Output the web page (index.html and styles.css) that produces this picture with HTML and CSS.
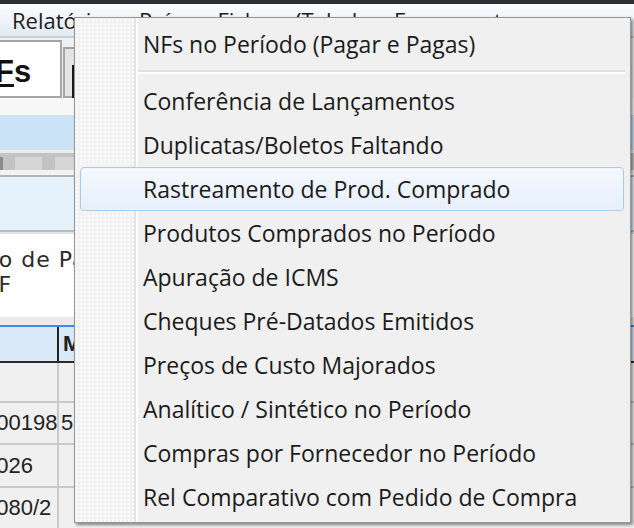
FILE: index.html
```html
<!DOCTYPE html>
<html lang="pt-BR">
<head>
    <meta charset="UTF-8">
    <title>Relatórios</title>
    <link rel="stylesheet" href="styles.css">
</head>
<body>
    <div class="screen">
        <div class="titlebar"></div>

        <div class="menubar">
            <span class="mb-item mb-rel">Relatórios</span>
            <span class="mb-item mb-pai">Países</span>
            <span class="mb-item mb-fic">Fichas</span>
            <span class="mb-item mb-tab">(Tabelas</span>
            <span class="mb-item">Ferramentas</span>
        </div>

        <div class="tabs">
            <div class="tab tab-main"><span class="tab-label"><u>F</u>s</span></div>
            <div class="tab tab-side"><span class="caret"></span></div>
        </div>

        <div class="gap-white"></div>
        <div class="band-blue"></div>

        <div class="toolstrip">
            <span class="tool tool-dark"></span>
            <span class="tool tool-a"></span>
            <span class="tool tool-b"></span>
        </div>
        <div class="strip-lines"></div>

        <div class="band-pale"></div>

        <div class="text-panel">
            <div class="line line-1">Tipo de Pagamento</div>
            <div class="line line-2">NF</div>
        </div>
        <div class="panel-foot"></div>

        <div class="grid">
            <div class="grid-head">
                <div class="c1"></div>
                <div class="c2">M</div>
            </div>
            <div class="grid-row r1">
                <div class="c1"></div>
                <div class="c2"></div>
            </div>
            <div class="grid-row r2">
                <div class="c1 cut">200198</div>
                <div class="c2">5</div>
            </div>
            <div class="grid-row r3">
                <div class="c1 cut">1026</div>
                <div class="c2"></div>
            </div>
            <div class="grid-row r4">
                <div class="c1 cut">2080/2</div>
                <div class="c2"></div>
            </div>
        </div>

        <!-- popup do menu Relatórios -->
        <div class="menu">
            <div class="item">NFs no Período (Pagar e Pagas)</div>
            <div class="sep"></div>
            <div class="item">Conferência de Lançamentos</div>
            <div class="item">Duplicatas/Boletos Faltando</div>
            <div class="item active">Rastreamento de Prod. Comprado</div>
            <div class="item">Produtos Comprados no Período</div>
            <div class="item">Apuração de ICMS</div>
            <div class="item">Cheques Pré-Datados Emitidos</div>
            <div class="item">Preços de Custo Majorados</div>
            <div class="item">Analítico / Sintético no Período</div>
            <div class="item">Compras por Fornecedor no Período</div>
            <div class="item">Rel Comparativo com Pedido de Compra</div>
        </div>
    </div>
</body>
</html>
```

FILE: styles.css
```css
* {
    margin: 0;
    padding: 0;
    box-sizing: border-box;
}

body {
    width: 634px;
    height: 528px;
    overflow: hidden;
    background: #f0f0f0;
    font-family: 'Open Sans', 'Noto Sans', sans-serif;
    color: #1c1c1c;
}

.screen {
    position: relative;
    width: 634px;
    height: 528px;
    overflow: hidden;
    display: flex;
    flex-direction: column;
}

.titlebar {
    height: 4px;
    flex: none;
    background: #2e3236;
}

.menubar {
    height: 34px;
    flex: none;
    display: flex;
    align-items: center;
    gap: 14px;
    padding-left: 12px;
    background: linear-gradient(#fbfcfe, #e3eaf3);
    border-bottom: 2px solid #c9cfd6;
    font-size: 22px;
    white-space: nowrap;
}

.mb-item {
    flex: none;
}

.mb-rel { margin-right: 10px; }

.tabs {
    height: 60px;
    flex: none;
    display: flex;
    padding-top: 2px;
    background: #f0f0f0;
}

.tab-main {
    width: 62px;
    background: #fff;
    border: 2px solid #a5a5a5;
    border-left: none;
    overflow: hidden;
    padding-top: 12px;
}

.tab-label {
    display: block;
    margin-left: -5px;
    font: bold 31px 'Liberation Sans', sans-serif;
    color: #111;
    white-space: nowrap;
}

.tab-side {
    width: 12px;
    margin-left: 1px;
    margin-top: 7px;
    background: #e4e4e4;
    border: 2px solid #a5a5a5;
    border-right: none;
    display: flex;
    justify-content: flex-end;
}

.caret {
    width: 3px;
    height: 33px;
    margin-top: 16px;
    background: #1a1a1a;
}

.gap-white {
    height: 17px;
    flex: none;
    background: #f7f7f7;
}

.band-blue {
    height: 35px;
    flex: none;
    background: #cce4f8;
}

.toolstrip {
    height: 20px;
    flex: none;
    display: flex;
    align-items: flex-end;
    background: #c3c3c3;
    border-top: 3px solid #ececec;
}

.tool {
    height: 13px;
    background: #d6d6d6;
}

.tool-dark { width: 3px; background: #8a8a8a; margin-right: 12px; }
.tool-a { width: 27px; margin-right: 13px; }
.tool-b { width: 30px; }

.strip-lines {
    height: 7px;
    flex: none;
    background: #f2f2f2;
    border-bottom: 2px solid #b5b5b5;
}

.band-pale {
    height: 55px;
    flex: none;
    background: #e5f1fb;
    border-bottom: 2px solid #bcbcbc;
}

.text-panel {
    height: 85px;
    flex: none;
    background: #fff;
    border-top: 2px solid #e2e2e2;
    padding-top: 13px;
    overflow: hidden;
    font: 22px/25px 'DejaVu Sans', sans-serif;
    letter-spacing: 1px;
    color: #2a2a2a;
    white-space: nowrap;
}

.line-1 { text-indent: -37px; }
.line-2 { text-indent: -19px; }

.panel-foot {
    height: 8px;
    flex: none;
    background: #ebebeb;
}

.grid {
    flex: 1;
    display: flex;
    flex-direction: column;
    font: 22px 'Liberation Sans', sans-serif;
    color: #222;
}

.grid-head {
    height: 38px;
    flex: none;
    display: flex;
    background: #d9e9f8;
    border-top: 2px solid #3a8ee8;
    border-bottom: 2px solid #2b2b2b;
}

.grid-head .c1 {
    width: 59px;
    border-right: 2px solid #222;
}

.grid-head .c2 {
    padding-left: 4px;
    font-weight: bold;
    display: flex;
    align-items: center;
}

.grid-row {
    flex: none;
    display: flex;
    background: #f0f0f0;
    border-bottom: 2px solid #c9c9c9;
}

.r1 { height: 40px; }
.r2 { height: 42px; }
.r3 { height: 43px; }
.r4 { height: 42px; }

.grid-row .c1 {
    width: 59px;
    border-right: 2px solid #c9c9c9;
    overflow: hidden;
    white-space: nowrap;
    display: flex;
    align-items: center;
}

.grid-row .c2 {
    padding-left: 2px;
    display: flex;
    align-items: center;
}

.cut { text-indent: -16px; }

/* popup */
.menu {
    position: absolute;
    left: 74px;
    top: 17px;
    width: 557px;
    height: 506px;
    padding: 4px 0;
    background: #f0f0f0;
    border: 1px solid #979797;
    box-shadow: 2px 2px 3px rgba(0, 0, 0, 0.45);
    font-size: 23px;
    color: #1b1b1b;
}

.menu::before {
    content: '';
    position: absolute;
    left: 0;
    top: 0;
    bottom: 0;
    width: 61px;
    background-color: #f2f2f2;
    background-image: radial-gradient(circle, #fafafa 0.8px, transparent 1px);
    background-size: 4px 4px;
    border-right: 2px solid #fff;
    box-shadow: inset -2px 0 0 #e2e3e3;
}

.item {
    position: relative;
    height: 44px;
    margin: 0 6px 0 5px;
    padding-left: 62px;
    display: flex;
    align-items: center;
    border: 1px solid transparent;
    border-radius: 4px;
    white-space: nowrap;
}

.item.active {
    border-color: #a9caf1;
    background: linear-gradient(#f5f9fe, #e6effb);
    box-shadow: inset 0 0 0 1px #eef5fe;
}

.sep {
    position: relative;
    height: 13px;
    margin: 0 5px 0 63px;
    padding-top: 4px;
}

.sep::before {
    content: '';
    display: block;
    height: 2px;
    background: #e0e0e0;
    border-bottom: 2px solid #fff;
    box-sizing: content-box;
}
```
